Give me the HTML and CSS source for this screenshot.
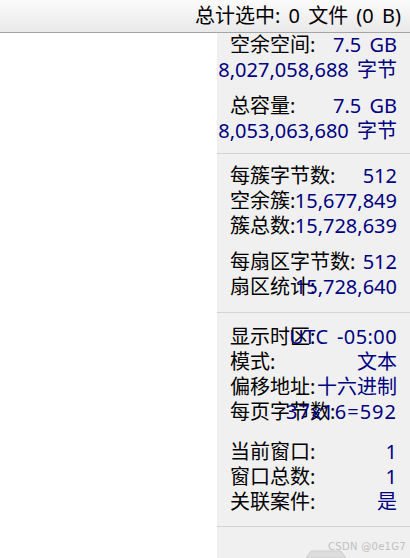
FILE: index.html
```html
<!DOCTYPE html>
<html lang="zh-CN">
<head>
    <meta charset="UTF-8">
    <meta name="viewport" content="width=device-width, initial-scale=1.0">
    <title>Info Panel</title>
    <link rel="stylesheet" href="styles.css">
</head>
<body>

    <div class="topbar">总计选中: 0 文件 (0 B)</div>

    <div class="main">
        <div class="blank"></div>

        <div class="panel">
            <!-- 磁盘空间 -->
            <div class="group">
                <div class="row"><span class="label">空余空间:</span><span class="value">7.5 GB</span></div>
                <div class="row"><span class="value">8,027,058,688 字节</span></div>
            </div>
            <div class="group">
                <div class="row"><span class="label">总容量:</span><span class="value">7.5 GB</span></div>
                <div class="row"><span class="value">8,053,063,680 字节</span></div>
            </div>

            <div class="sep"></div>

            <!-- 簇 / 扇区 -->
            <div class="group">
                <div class="row"><span class="label">每簇字节数:</span><span class="value">512</span></div>
                <div class="row"><span class="label">空余簇:</span><span class="value">15,677,849</span></div>
                <div class="row"><span class="label">簇总数:</span><span class="value">15,728,639</span></div>
            </div>
            <div class="group">
                <div class="row"><span class="label">每扇区字节数:</span><span class="value">512</span></div>
                <div class="row"><span class="label">扇区统计:</span><span class="value">15,728,640</span></div>
            </div>

            <div class="sep sep-2"></div>

            <!-- 显示 -->
            <div class="group">
                <div class="row"><span class="label">显示时区:</span><span class="value spaced-sm">UTC -05:00</span></div>
                <div class="row"><span class="label">模式:</span><span class="value">文本</span></div>
                <div class="row"><span class="label">偏移地址:</span><span class="value">十六进制</span></div>
                <div class="row"><span class="label">每页字节数:</span><span class="value spaced">37x16=592</span></div>
            </div>
            <div class="group group-wide">
                <div class="row"><span class="label">当前窗口:</span><span class="value">1</span></div>
                <div class="row"><span class="label">窗口总数:</span><span class="value">1</span></div>
                <div class="row"><span class="label">关联案件:</span><span class="value">是</span></div>
            </div>

            <div class="sep sep-3"></div>

            <div class="watermark">CSDN @0e1G7</div>

            <svg class="tab" width="40" height="8" viewBox="0 0 40 8">
                <polygon points="0,8 5,1 35,1 40,8" fill="#dcdcdc" stroke="#cfcfcf" stroke-width="1"/>
            </svg>
        </div>
    </div>

</body>
</html>
```

FILE: styles.css
```css
* {margin: 0; padding: 0; box-sizing: border-box;}

body {
    width: 410px;
    height: 558px;
    overflow: hidden;
    background: #fff;
    font-family: "Noto Sans", "Noto Sans CJK SC", sans-serif;
    font-size: 20px;
    color: #000;
}

.topbar {
    height: 33px;
    padding-right: 9px;
    border-bottom: 1px solid #a5a5a5;
    background: linear-gradient(#fbfbfb, #e9e9e9);
    text-align: right;
    line-height: 32px;
    word-spacing: 3px;
    white-space: nowrap;
}

.main {
    display: flex;
    height: 525px;
}

.blank {
    width: 217px;
    flex-shrink: 0;
}

.panel {
    position: relative;
    flex: 1;
    min-width: 0;
    background: #f0f0f0;
    padding: 0 13px;
}

.group:first-child {
    margin-top: -1px;
}

.group + .group {
    margin-top: 11px;
}

.group-wide {
    margin-top: 15px !important;
}

.row {
    display: grid;
    grid-template-columns: 100%;
    height: 25px;
    line-height: 25px;
    white-space: nowrap;
}

.label, .value {
    grid-area: 1 / 1;
}

.label {
    justify-self: start;
}

.value {
    justify-self: end;
    color: #000080;
    word-spacing: 3px;
}

.spaced {
    letter-spacing: 1px;
}

.spaced-sm {
    letter-spacing: 0.4px;
}

.sep {
    height: 1px;
    background: #d4d4d4;
    margin: 10px -13px 9px -13px;
}

.sep-2 {
    margin-top: 13px;
    margin-bottom: 11px;
}

.sep-3 {
    margin-top: 12px;
}

.watermark {
    position: absolute;
    right: 4px;
    bottom: 6px;
    font-family: "DejaVu Sans", sans-serif;
    font-size: 10px;
    color: #c0c0c0;
    letter-spacing: 0.3px;
    white-space: nowrap;
}

.tab {
    position: absolute;
    left: 89px;
    bottom: 0;
}
```
